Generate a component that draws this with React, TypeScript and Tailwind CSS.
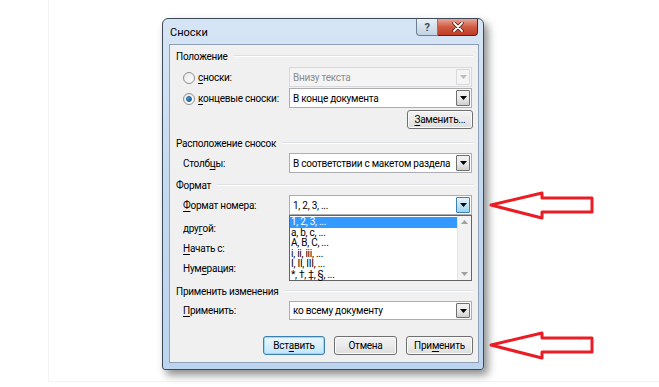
import React from "react";

function U({ children }: { children: React.ReactNode }) {
  return <span className="underline underline-offset-[2px] decoration-[1px]">{children}</span>;
}

function Arrow({ disabled, focused }: { disabled?: boolean; focused?: boolean }) {
  const box = focused
    ? "border-[#3c7fb1] bg-gradient-to-b from-[#e5f4fc] via-[#c4e5f6] to-[#98d1ef]"
    : disabled
    ? "border-[#d9d9d9] bg-[#f4f4f4]"
    : "border-[#707070] bg-gradient-to-b from-[#f2f2f2] via-[#ebebeb] to-[#cfcfcf]";
  return (
    <div className={`w-[14px] my-[1px] mr-[1px] border rounded-[1px] flex items-center justify-center ${box}`}>
      <svg width="7" height="4" viewBox="0 0 7 4">
        <polygon points="0,0 7,0 3.5,4" fill={disabled ? "#bcbcbc" : "#000"} />
      </svg>
    </div>
  );
}

function Select({ text, disabled, focused, h = "h-[20px]" }: { text: string; disabled?: boolean; focused?: boolean; h?: string }) {
  return (
    <div
      className={`w-[183px] ${h} flex border ${
        disabled ? "border-[#d9d9d9] bg-[#f4f4f4] text-[#8d8d8d]" : "border-[#abadb3] bg-white text-black"
      }`}
    >
      <div className="flex-1 flex items-center pl-[3px] pt-px whitespace-nowrap overflow-hidden">{text}</div>
      <Arrow disabled={disabled} focused={focused} />
    </div>
  );
}

function Header({ text }: { text: string }) {
  return (
    <div className="h-[14px] flex items-center pl-[6px] pr-[5px] gap-[6px]">
      <span className="whitespace-nowrap pt-px">{text}</span>
      <div className="flex-1 h-[2px] border-t border-[#dcdfe3] border-b border-b-white" />
    </div>
  );
}

function Row({ label, children, h = "h-[20px]" }: { label: React.ReactNode; children?: React.ReactNode; h?: string }) {
  return (
    <div className={`flex ${h} items-center`}>
      <div className="w-[119px] pl-[13px] pt-px whitespace-nowrap">{label}</div>
      {children}
    </div>
  );
}

function Radio({ checked }: { checked?: boolean }) {
  return (
    <div className="w-[12px] h-[12px] rounded-full border border-[#8f8f8f] bg-gradient-to-br from-[#e6e6e6] to-[#ffffff] flex items-center justify-center mr-[3px]">
      {checked && (
        <div className="w-[6px] h-[6px] rounded-full bg-gradient-to-br from-[#5fb8f0] to-[#0b4f8a] border border-[#1a5f99]" />
      )}
    </div>
  );
}

function Btn({ children, def, w }: { children: React.ReactNode; def?: boolean; w: string }) {
  return (
    <div
      className={`${w} h-[19px] rounded-[3px] border flex items-center justify-center pt-px ${
        def
          ? "border-[#3c7fb1] bg-gradient-to-b from-[#eaf6fd] via-[#d9f0fc] to-[#bee6fd] shadow-[inset_0_0_0_1px_#9fd6f3]"
          : "border-[#707070] bg-gradient-to-b from-[#f2f2f2] via-[#ebebeb] to-[#dcdcdc] shadow-[inset_0_0_0_1px_#fcfcfc]"
      }`}
    >
      {children}
    </div>
  );
}

export default function App() {
  const items = ["1, 2, 3, ...", "a, b, c, ...", "A, B, C, ...", "i, ii, iii, ...", "I, II, III, ...", "*, †, ‡, §, ..."];
  return (
    <div className="relative w-[659px] h-[387px] bg-white overflow-hidden font-['Roboto',sans-serif] text-[10px] tracking-[-0.25px] text-black leading-none">
      <div className="ml-[48px] w-[620px] h-[382px] border-l border-b border-[#f3f3f3] pt-[18px] pl-[113px]">
        {/* Dialog */}
        <div className="w-[322px] h-[352px] rounded-t-[6px] rounded-b-[3px] border border-[#3d4a5a] bg-gradient-to-b from-[#d6e5f5] via-[#c4d9ef] to-[#bcd4ee] shadow-[4px_5px_8px_rgba(0,0,0,0.45)] flex flex-col">
          {/* Title bar */}
          <div className="h-[25px] flex items-start">
            <div className="flex-1 h-full flex items-center pl-[7px] pt-px text-[11px] tracking-normal text-black">Сноски</div>
            <div className="flex mr-[5px]">
              <div className="w-[22px] h-[17px] rounded-bl-[4px] border border-t-0 border-[#6d7f95] bg-gradient-to-b from-[#e9eff6] to-[#c2d2e3] flex items-center justify-center text-[11px] font-bold text-[#3a4a5e]">
                ?
              </div>
              <div className="w-[40px] h-[17px] rounded-br-[4px] border border-t-0 border-l-0 border-[#5a2020] bg-gradient-to-b from-[#e8a493] via-[#cf5a43] to-[#c03a23] flex items-center justify-center">
                <svg width="12" height="10" viewBox="0 0 12 10">
                  <path d="M2 1 L10 9 M10 1 L2 9" stroke="#4a1a10" strokeWidth="3.4" strokeLinecap="round" />
                  <path d="M2 1 L10 9 M10 1 L2 9" stroke="#fff" strokeWidth="1.8" strokeLinecap="round" />
                </svg>
              </div>
            </div>
          </div>
          {/* Client area */}
          <div className="ml-[6px] w-[310px] h-[319px] border border-[#8fa1b6] bg-[#f0f0f0] flex flex-col pt-[4px]">
            <Header text="Положение" />
            <div className="h-[4px]" />
            <Row
              label={
                <div className="flex items-center">
                  <Radio />
                  <span>
                    <U>с</U>носки:
                  </span>
                </div>
              }
            >
              <Select text="Внизу текста" disabled />
            </Row>
            <div className="h-[1px]" />
            <Row
              label={
                <div className="flex items-center">
                  <Radio checked />
                  <span>
                    <U>к</U>онцевые сноски:
                  </span>
                </div>
              }
            >
              <Select text="В конце документа" />
            </Row>
            <div className="h-[2px]" />
            <div className="flex justify-end pr-[5px]">
              <Btn w="w-[66px]">
                <U>З</U>аменить...
              </Btn>
            </div>
            <div className="h-[7px]" />
            <Header text="Расположение сносок" />
            <div className="h-[3px]" />
            <Row
              label={
                <span>
                  Столб<U>ц</U>ы:
                </span>
              }
            >
              <Select text="В соответствии с макетом раздела" />
            </Row>
            <div className="h-[5px]" />
            <Header text="Формат" />
            <div className="h-[3px]" />
            <Row
              label={
                <span>
                  <U>Ф</U>ормат номера:
                </span>
              }
            >
              <div className="relative">
                <Select text="1, 2, 3, ..." focused />
                {/* open list */}
                <div className="absolute left-0 top-[20px] w-[183px] h-[66px] border border-[#646464] bg-white flex z-10">
                  <div className="flex-1 flex flex-col pt-px">
                    {items.map((t, i) => (
                      <div
                        key={t}
                        className={
                          i === 0
                            ? "h-[10.5px] flex items-center pl-[1px] bg-[#3399ff] text-white"
                            : "h-[10.5px] flex items-center pl-[1px] text-black"
                        }
                      >
                        {t}
                      </div>
                    ))}
                  </div>
                  <div className="w-[14px] bg-[#f2f2f2] border-l border-[#e6e6e6] flex flex-col justify-between items-center py-[4px]">
                    <svg width="7" height="4" viewBox="0 0 7 4">
                      <polygon points="3.5,0 7,4 0,4" fill="#a0a0a0" />
                    </svg>
                    <svg width="7" height="4" viewBox="0 0 7 4">
                      <polygon points="0,0 7,0 3.5,4" fill="#a0a0a0" />
                    </svg>
                  </div>
                </div>
              </div>
            </Row>
            <div className="h-[3px]" />
            <Row
              label={
                <span>
                  дру<U>г</U>ой:
                </span>
              }
            />
            <Row
              label={
                <span>
                  <U>Н</U>ачать с:
                </span>
              }
            />
            <Row
              label={
                <span>
                  Нум<U>е</U>рация:
                </span>
              }
            />
            <div className="h-[6px]" />
            <Header text="Применить изменения" />
            <div className="h-[3px]" />
            <Row
              h="h-[19px]"
              label={
                <span>
                  <U>П</U>рименить:
                </span>
              }
            >
              <Select text="ко всему документу" h="h-[19px]" />
            </Row>
            <div className="h-[16px]" />
            <div className="flex justify-end pr-[5px] gap-[9px]">
              <Btn w="w-[62px]" def>
                Вст<U>а</U>вить
              </Btn>
              <Btn w="w-[63px]">Отмена</Btn>
              <Btn w="w-[67px]">
                При<U>м</U>енить
              </Btn>
            </div>
          </div>
        </div>
      </div>

      {/* Red annotation arrows */}
      <svg className="absolute left-0 top-0 pointer-events-none" width="659" height="387" viewBox="0 0 659 387">
        <polygon
          points="491,205 542,193 542,198 592,198 592,212 542,212 542,218"
          fill="none"
          stroke="#ea1c24"
          strokeWidth="3"
          strokeLinejoin="round"
        />
        <polygon
          points="491,345 542,333 542,338 592,338 592,352 542,352 542,358"
          fill="none"
          stroke="#ea1c24"
          strokeWidth="3"
          strokeLinejoin="round"
        />
      </svg>
    </div>
  );
}
